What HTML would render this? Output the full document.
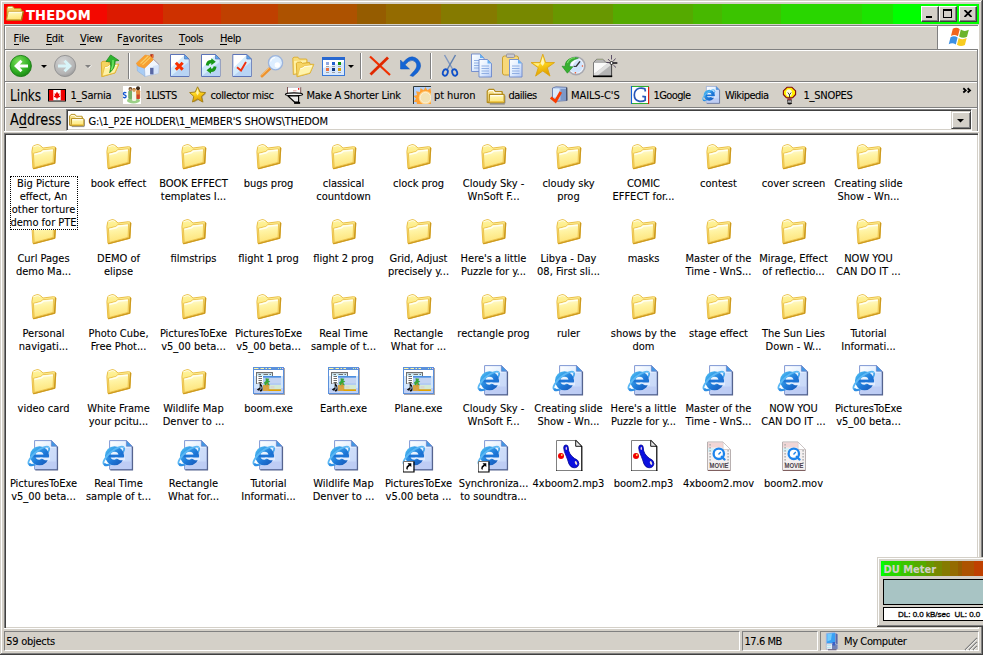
<!DOCTYPE html>
<html><head><meta charset="utf-8"><title>THEDOM</title>
<style>
html,body{margin:0;padding:0}
body{width:983px;height:655px;background:#d4d0c8;position:relative;overflow:hidden;font-family:"DejaVu Sans Condensed","Liberation Sans",sans-serif;font-size:11px;color:#000;line-height:13px;-webkit-text-stroke:0.1px}
.a{position:absolute}
.hl{position:absolute;height:1px;left:4px;width:975px}
.t{position:absolute;white-space:pre}
.lbl{position:absolute;width:75px;text-align:center;white-space:pre;line-height:13px;font-size:11px}
.ic{position:absolute;width:32px;height:32px;overflow:visible}
.lk{position:absolute;top:89px;white-space:pre;font-size:11px;line-height:13px}
u{text-decoration:none;border-bottom:1px solid #000;display:inline-block;line-height:10px;padding-bottom:0}
</style></head>
<body>

<svg width="0" height="0" style="position:absolute">
<defs>
<linearGradient id="fg" x1="0" y1="0" x2="0.15" y2="1"><stop offset="0" stop-color="#fffde0"/><stop offset="0.45" stop-color="#fff3a2"/><stop offset="1" stop-color="#fee47a"/></linearGradient>
<linearGradient id="fb" x1="0" y1="0" x2="0" y2="1"><stop offset="0" stop-color="#fff6a4"/><stop offset="0.35" stop-color="#fdea84"/><stop offset="1" stop-color="#f4d25c"/></linearGradient>
<linearGradient id="pg" x1="0" y1="0" x2="1" y2="1"><stop offset="0" stop-color="#ffffff"/><stop offset="0.45" stop-color="#e4f0ff"/><stop offset="1" stop-color="#b4c8f4"/></linearGradient>
<linearGradient id="eg" x1="0" y1="0" x2="1" y2="1"><stop offset="0" stop-color="#46b4f0"/><stop offset="0.6" stop-color="#1e78d8"/><stop offset="1" stop-color="#1860c0"/></linearGradient>
<radialGradient id="gb" cx="0.4" cy="0.3" r="0.8"><stop offset="0" stop-color="#7ee05a"/><stop offset="0.6" stop-color="#2fae22"/><stop offset="1" stop-color="#157a10"/></radialGradient>
<radialGradient id="gf" cx="0.4" cy="0.3" r="0.8"><stop offset="0" stop-color="#d4d4d4"/><stop offset="0.7" stop-color="#b4b4b4"/><stop offset="1" stop-color="#8c8c8c"/></radialGradient>
<linearGradient id="sg" x1="0" y1="0" x2="0.3" y2="1"><stop offset="0" stop-color="#fff6a0"/><stop offset="0.5" stop-color="#ffd820"/><stop offset="1" stop-color="#e0a000"/></linearGradient>

<!-- large folder -->
<symbol id="fo" viewBox="0 0 32 32">
<path d="M4.9 12.5 L5.700 8.100 Q6 7 7.100 6.600 L10 5.700 Q11 5.500 11.900 5.900 L13.700 6.800 L15.900 9 L26.400 7.700 Q28.800 7.500 28.800 9.500 L27.900 24.300 L6.800 29.700 Q6 29.800 5.900 29 Z" fill="url(#fb)" stroke="#e6b838" stroke-width="0.900" stroke-linejoin="round"/>
<path d="M6.300 7.800 L10 6.700 Q11 6.500 11.800 6.900 L13.200 7.600" fill="none" stroke="#fffce8" stroke-width="1"/>
<path d="M28.500 9.200 L27.600 24 L6.800 29.400" fill="none" stroke="#cc9a20" stroke-width="1.500" stroke-linejoin="round" stroke-linecap="round"/>
<path d="M6.400 14.300 L13.700 12.500 L15.800 10.700 L26.600 9.800 L26.100 23.400 L7.200 28.500 Z" fill="url(#fg)" stroke="#e8ba40" stroke-width="0.800" stroke-linejoin="round"/>
<path d="M7.500 15.400 L14.200 13.800 L16.300 12.100 L25.700 11.200" fill="none" stroke="#fffff4" stroke-width="1.400"/>
</symbol>

<!-- IE html doc -->
<symbol id="ie" viewBox="0 0 32 32">
<path d="M7.6 1.6 L24.4 1.6 L30 7.2 L30 30.3 L7.6 30.3 Z" fill="url(#pg)" stroke="#7f98d4" stroke-width="1"/>
<path d="M22 9 L29.5 9 L29.5 29.8 L8.100 29.8 L8.100 22 L22 22 Z" fill="#c9d9f8" opacity="0.75"/>
<path d="M8.100 22.500 H29.500 V29.800 H8.100 Z" fill="#b9c8f2" opacity="0.7"/>
<path d="M30.500 7.500 L30.500 30.900 L8.300 30.900" fill="none" stroke="#56648f" stroke-width="1.2"/>
<path d="M24.400 1.600 L24.400 7.200 L30 7.200 Z" fill="#3f98e6" stroke="#7088c8" stroke-width="0.8"/>
<path d="M21.760 8.440 A13 4.600 -40 0 1 1.840 25.160" fill="none" stroke="#4aa8ee" stroke-width="1.7"/>
<circle cx="12.500" cy="16.700" r="6.800" fill="none" stroke="url(#eg)" stroke-width="5.500"/>
<rect x="6.500" y="15.600" width="15" height="2.900" fill="#1c74d6"/>
<path d="M12.500 18.500 L23 18.500 L23 21.300 L18 21.300 Z" fill="#e2edff"/>
<path d="M1.840 25.160 A13 4.600 -40 0 1 21.760 8.440" fill="none" stroke="#5cb8f4" stroke-width="1.800"/>
<path d="M1.500 24.500 Q1.500 27.800 5 27.300 Q8 26.800 10.500 25.600 Q5.500 26.300 3.300 24.300 Z" fill="#2e8ee4"/>
</symbol>

<!-- shortcut overlay -->
<symbol id="sc" viewBox="0 0 32 32" overflow="visible">
<rect x="1.5" y="22.5" width="10" height="10" fill="#fff"/>
<path d="M1.5 33 V22.5 H12" fill="none" stroke="#707070" stroke-width="1"/>
<path d="M12 22.500 V33 H1" fill="none" stroke="#000" stroke-width="1.2"/>
<path d="M9.300 24.300 L5.500 24.300 L6.700 25.500 Q3.800 27.300 4.200 29.700 L5.400 30.900 Q5.300 28.300 7.900 26.700 L9.300 28.100 Z" fill="#000"/>
</symbol>

<!-- exe icon -->
<symbol id="ex" viewBox="0 0 32 32" overflow="visible">
<rect x="2" y="4" width="31" height="27" fill="#90888c" opacity="0.75"/>
<rect x="1" y="3" width="31" height="27" fill="#5b90dc"/>
<rect x="2" y="6" width="29" height="6" fill="#fff"/>
<rect x="2" y="12" width="29" height="12" fill="#d2e6fc"/>
<rect x="2" y="24" width="29" height="5" fill="#c0d0f4"/>
<path d="M2 4.500 H6.500 M8.500 4.500 H12 M13.500 4.500 H15 M16.500 4.500 H19" stroke="#fff6a0" stroke-width="1"/>
<rect x="26" y="4" width="1" height="1" fill="#d8f4a0"/><rect x="28" y="4" width="1" height="1" fill="#d8f4a0"/><rect x="30" y="4" width="1" height="1" fill="#fcc8ec"/>
<rect x="4" y="8" width="17" height="12" fill="#707070"/>
<rect x="5" y="9.500" width="15" height="10" fill="#fff"/>
<rect x="5" y="9.500" width="15" height="2.500" fill="#d0f0fc"/>
<path d="M6.500 10.500 H9 M11.500 10.500 H16 M17.500 10.500 H19 M6.500 12.500 H10 M6.500 14.500 H10 M6.500 16.500 H10 M6.500 18.500 H10" stroke="#707070" stroke-width="1"/>
<rect x="11" y="12" width="18" height="15" fill="#b4ccf2"/>
<rect x="11" y="12" width="18" height="1.600" fill="#4c8ee0"/>
<rect x="17.500" y="14" width="11.500" height="5" fill="#c4d4f2"/>
<rect x="11" y="21" width="6.500" height="6" fill="#d8a444"/>
<rect x="17.500" y="21" width="11.500" height="4.300" fill="#d4ead4"/><rect x="18.500" y="22" width="4" height="2.500" fill="#d8d8d0"/>
<rect x="16.500" y="25.300" width="12.500" height="1.700" fill="#e2a200"/>
<path d="M13.500 14.300 L17.300 14.800 L16.300 16.500 L18.300 17.500 L16.200 18.800 L18 21.300 L14.500 20.600 L13 21.500 L12 18.500 L13.800 17 Z" fill="#36a63a"/>
<path d="M14.800 19 L15.600 19 L15.400 22.500 L14.500 22.500 Z" fill="#c88820"/>
<path d="M7.700 18.500 L8.500 18.500 L8.500 19.500 Q10.800 21 10.500 24 L10.500 26.500 L8.800 27.800 L7.300 26.500 L9.500 25 L9.500 23 Q8.800 22 8.500 21.800 L8.500 25 L6.500 26.800 L4.800 25.500 L7.700 23.500 Z" fill="#101010"/>
</symbol>

<!-- mp3 icon -->
<symbol id="mp" viewBox="0 0 32 32">
<path d="M4.5 1.5 L23.5 1.5 L29.5 7.5 L29.5 32.5 L4.5 32.5 Z" fill="#fff"/>
<path d="M4.5 32.5 L4.5 1.5 L23.5 1.5" fill="none" stroke="#808080" stroke-width="1"/>
<path d="M23.5 1.2 L29.800 7.500 L29.800 32.500" fill="none" stroke="#000" stroke-width="1.2"/><path d="M30.400 32.400 L4 32.400" fill="none" stroke="#000" stroke-width="1.800"/>
<path d="M23.7 1.8 L23.7 7.3 L29.2 7.3" fill="#e8e8e8" stroke="#000" stroke-width="0.9"/>
<circle cx="9" cy="17" r="3" fill="#f00000"/><circle cx="9.8" cy="16" r="0.9" fill="#ffe060"/>
<path d="M11.700 8.800 Q11.700 5.900 14 5.900 Q16.300 6 16.300 9 Q16.300 12 17.800 14.500 Q19.500 17.300 22.300 19.300 Q26.900 21 26.900 24.600 Q26.500 28.800 22 28.800 Q18.500 28.500 17 25 Q15.600 20.500 14.300 17.300 Q11.700 12 11.700 8.800 Z" fill="#0a10e0" stroke="#000090" stroke-width="0.800"/>
<ellipse cx="14.3" cy="9.4" rx="0.7" ry="1.6" fill="#f0d0e0"/><ellipse cx="24" cy="24" rx="1" ry="2" transform="rotate(-25 24 24)" fill="#f0e0d0"/>
</symbol>

<!-- mov icon -->
<symbol id="mv" viewBox="0 0 32 32">
<path d="M5.5 3 L21 3 L28.5 10.5 L28.5 31.3 L5.5 31.3 Z" fill="#f4f0f0" stroke="#b8b0b0" stroke-width="1"/>
<path d="M6 31.6 H28.3" stroke="#806060" stroke-width="1.2"/>
<path d="M21 3 L28.5 10.5 L21 10.5 Z" fill="#fff" stroke="#c8c0c0" stroke-width="0.8"/>
<rect x="6" y="3.5" width="15" height="5" fill="#f0d0d0" opacity="0.8"/>
<rect x="6" y="9" width="6" height="4" fill="#d0f0f8" opacity="0.8"/>
<g fill="#b4b4b4"><rect x="7.3" y="5" width="1.6" height="1.6"/><rect x="7.3" y="8" width="1.6" height="1.6"/><rect x="7.3" y="11" width="1.6" height="1.6"/><rect x="7.3" y="14" width="1.6" height="1.6"/><rect x="7.3" y="17" width="1.6" height="1.6"/><rect x="7.3" y="20" width="1.6" height="1.6"/><rect x="7.3" y="23" width="1.6" height="1.6"/>
<rect x="25.3" y="11" width="1.6" height="1.6"/><rect x="25.3" y="14" width="1.6" height="1.6"/><rect x="25.3" y="17" width="1.6" height="1.6"/><rect x="25.3" y="20" width="1.6" height="1.6"/><rect x="25.3" y="23" width="1.6" height="1.6"/></g>
<circle cx="16.8" cy="14.8" r="5.2" fill="#fff" stroke="#1c84ec" stroke-width="2.300"/>
<path d="M19.800 17.800 L22.500 20.500" stroke="#1c84ec" stroke-width="2.400" stroke-linecap="round"/>
<path d="M16.5 15.5 L18.8 13" stroke="#1c84ec" stroke-width="1.3"/>
<text x="17" y="29.3" font-family="'Liberation Sans',sans-serif" font-size="6.6" font-weight="700" fill="#484048" text-anchor="middle" textLength="19" lengthAdjust="spacingAndGlyphs">MOVIE</text>
</symbol>

<!-- small folder 16 -->
<symbol id="sf" viewBox="0 0 16 16" overflow="visible">
<path d="M2.800 14.600 H15.300 M15.400 7.500 V14.200" stroke="#606068" stroke-width="1" opacity="0.7"/>
<path d="M0.600 13.300 L0.600 4 L2.100 2.400 L6 2.400 L7.400 4.300 L12.800 4.300 Q13.300 4.300 13.300 5 L13.300 13.300 Z" fill="#f8e288" stroke="#b48c1c" stroke-width="1" stroke-linejoin="round"/>
<path d="M1.600 4.300 L2.500 3.400 L5.600 3.400 L6.800 5.300 L12.300 5.300" fill="none" stroke="#fffdf0" stroke-width="1"/>
<path d="M2.500 6.600 L14.300 6.600 Q14.900 6.600 14.900 7.200 L14.900 13.100 Q14.900 13.700 14.300 13.700 L1.500 13.700 Q2.300 13 2.300 12 Z" fill="url(#fg)" stroke="#b48c1c" stroke-width="1" stroke-linejoin="round"/>
<path d="M3.300 7.700 H13.800" stroke="#fffef4" stroke-width="1"/>
<path d="M3 12.700 H14.300" stroke="#f0c848" stroke-width="1"/>
</symbol>
</defs>
</svg>


<div class="a" style="left:0;top:0;width:983px;height:655px;background:#d4d0c8"></div>
<div class="a" style="left:1px;top:1px;width:980px;height:1px;background:#fff"></div>
<div class="a" style="left:1px;top:1px;width:1px;height:652px;background:#fff"></div>
<div class="a" style="left:982px;top:0;width:1px;height:655px;background:#404040"></div>
<div class="a" style="left:0;top:654px;width:983px;height:1px;background:#404040"></div>
<div class="a" style="left:981px;top:1px;width:1px;height:653px;background:#808080"></div>
<div class="a" style="left:1px;top:653px;width:981px;height:1px;background:#808080"></div>

<div class="a" style="left:4px;top:4px;width:975px;height:20px;background:#f00"><div class="a" style="left:0px;top:0;width:46px;height:20px;background:rgb(255,0,0)"></div><div class="a" style="left:46px;top:0;width:57px;height:20px;background:rgb(244,8,0)"></div><div class="a" style="left:103px;top:0;width:56px;height:20px;background:rgb(220,26,0)"></div><div class="a" style="left:159px;top:0;width:58px;height:20px;background:rgb(206,49,0)"></div><div class="a" style="left:217px;top:0;width:57px;height:20px;background:rgb(191,64,0)"></div><div class="a" style="left:274px;top:0;width:79px;height:20px;background:rgb(173,82,0)"></div><div class="a" style="left:353px;top:0;width:29px;height:20px;background:rgb(149,92,0)"></div><div class="a" style="left:382px;top:0;width:55px;height:20px;background:rgb(148,107,0)"></div><div class="a" style="left:437px;top:0;width:56px;height:20px;background:rgb(133,122,0)"></div><div class="a" style="left:493px;top:0;width:56px;height:20px;background:rgb(119,136,0)"></div><div class="a" style="left:549px;top:0;width:60px;height:20px;background:rgb(104,151,0)"></div><div class="a" style="left:609px;top:0;width:80px;height:20px;background:rgb(85,170,0)"></div><div class="a" style="left:689px;top:0;width:29px;height:20px;background:rgb(71,184,0)"></div><div class="a" style="left:718px;top:0;width:59px;height:20px;background:rgb(59,196,0)"></div><div class="a" style="left:777px;top:0;width:81px;height:20px;background:rgb(41,214,0)"></div><div class="a" style="left:858px;top:0;width:31px;height:20px;background:rgb(27,228,0)"></div><div class="a" style="left:889px;top:0;width:86px;height:20px;background:rgb(0,255,0)"></div></div>
<!-- title -->
<svg class="a" style="left:5px;top:4px;width:20px;height:20px" viewBox="0 0 20 20">
<path d="M2 4.300 Q2 2.800 3.500 2.600 L7 2.400 Q8 2.400 8.600 3.200 L9.500 4.500 L15 4.500 Q16.300 4.500 16.300 5.800 L16.300 8 L2 15 Z" fill="#f4d468" stroke="#c49a20" stroke-width="0.900"/>
<path d="M3 3.600 L7.300 3.400" stroke="#fffbe0" stroke-width="1.100"/>
<path d="M3.300 7.300 L18.300 7.300 L16.300 16 L1.600 16 Z" fill="url(#fg)" stroke="#c89c20" stroke-width="0.900" stroke-linejoin="round"/>
<path d="M4 8.400 H17" stroke="#fffce8" stroke-width="1"/>
<path d="M18.300 7.600 L16.500 16.200 L2 16.300" fill="none" stroke="#a47c14" stroke-width="1.100"/>
</svg>
<div class="t" style="left:26px;top:5px;font-size:14.5px;font-weight:700;color:#fff;line-height:20px;letter-spacing:0.2px">THEDOM</div>
<!-- caption buttons -->
<div class="a cb" style="left:921px"><div class="a" style="left:4px;top:9px;width:6px;height:2px;background:#000"></div></div>
<div class="a cb" style="left:939px"><div class="a" style="left:3px;top:2px;width:9px;height:9px;box-sizing:border-box;border:1px solid #000;border-top-width:2px"></div></div>
<div class="a cb" style="left:959px"><svg class="a" style="left:4px;top:3px" width="8" height="7" viewBox="0 0 8 7"><path d="M0.500 0 L7.500 7 M7.500 0 L0.500 7" stroke="#000" stroke-width="1.900"/></svg></div>
<style>
.cb{top:6px;width:18px;height:16px;box-sizing:border-box;background:#d4d0c8;border:1px solid;border-color:#fff #404040 #404040 #fff;box-shadow:inset -1px -1px 0 #808080}
.sep{position:absolute;top:53px;width:1px;height:26px;background:#808080;box-shadow:1px 0 0 #fff}
.mi{position:absolute;top:32px;font-size:11px;line-height:13px;white-space:pre}
</style>
<!-- rebar border -->
<div class="hl" style="top:25px;background:#808080"></div>
<div class="hl" style="top:26px;left:5px;width:972px;background:#fff"></div>
<div class="a" style="left:4px;top:25px;width:1px;height:107px;background:#808080"></div>
<div class="a" style="left:5px;top:26px;width:1px;height:105px;background:#fff"></div>
<div class="a" style="left:977px;top:26px;width:1px;height:105px;background:#808080"></div><div class="a" style="left:978px;top:25px;width:1px;height:107px;background:#fff"></div>
<div class="hl" style="top:49px;background:#808080;left:5px;width:972px"></div><div class="hl" style="top:50px;background:#fff;left:5px;width:972px"></div>
<div class="hl" style="top:81px;background:#808080;left:5px;width:972px"></div><div class="hl" style="top:82px;background:#fff;left:5px;width:972px"></div>
<div class="hl" style="top:107px;background:#808080;left:5px;width:972px"></div><div class="hl" style="top:108px;background:#fff;left:5px;width:972px"></div>
<div class="hl" style="top:131px;background:#fff"></div>
<!-- menu -->
<div class="mi" style="letter-spacing:-0.4px;left:13.5px"><u>F</u>ile</div>
<div class="mi" style="letter-spacing:-0.4px;left:46px"><u>E</u>dit</div>
<div class="mi" style="letter-spacing:-0.4px;left:80px"><u>V</u>iew</div>
<div class="mi" style="left:117px">F<u>a</u>vorites</div>
<div class="mi" style="letter-spacing:-0.4px;left:179px"><u>T</u>ools</div>
<div class="mi" style="letter-spacing:-0.4px;left:220px"><u>H</u>elp</div>
<!-- throbber -->
<div class="a" style="left:937px;top:26px;width:1px;height:23px;background:#808080"></div>
<div class="a" style="left:938px;top:26px;width:40px;height:23px;background:#fff"></div>
<svg class="a" style="left:947.5px;top:26.3px" width="23.500" height="22.600" viewBox="0 0 22 20" preserveAspectRatio="none">
<path d="M4.5 2.5 Q8 0.5 11 2.8 L9.3 9 Q6 7 2.8 8.8 Z" fill="#f0641c"/>
<path d="M12 3.2 Q15.5 5.5 19.5 3.4 L17.8 9.6 Q14 11.5 10.4 9.4 Z" fill="#6cb42c"/>
<path d="M2.4 9.9 Q5.8 8 9 10.1 L7.3 16.3 Q4 14.3 0.7 16.2 Z" fill="#3c90e4"/>
<path d="M10 10.6 Q13.6 12.7 17.5 10.7 L15.8 16.9 Q12 18.8 8.4 16.7 Z" fill="#f8cc20"/>
</svg>
<!-- toolbar -->
<svg class="a" style="left:0;top:50px" width="640" height="32" viewBox="0 50 640 32">
<!-- back -->
<circle cx="20.8" cy="66" r="10.6" fill="url(#gb)" stroke="#1a7a14" stroke-width="0.9"/>
<path d="M14 66 L20.5 59.8 L22.5 61.8 L19.8 64.5 L28 64.5 L28 67.5 L19.8 67.5 L22.5 70.2 L20.5 72.2 Z" fill="#fff"/>
<path d="M41 65 h6 l-3 3 Z" fill="#000"/>
<!-- forward -->
<circle cx="65.1" cy="66" r="10.6" fill="url(#gf)" stroke="#909090" stroke-width="0.9"/>
<path d="M72 66 L65.5 59.8 L63.5 61.8 L66.2 64.5 L58 64.5 L58 67.5 L66.2 67.5 L63.5 70.2 L65.5 72.2 Z" fill="#d8f4f8"/>
<path d="M85 65 h6 l-3 3 Z" fill="#808080"/><path d="M88.5 68.3 l3 -3" stroke="#fff" stroke-width="0.8"/>
<!-- up folder -->
<path d="M101.300 62.300 L103 61.300 L107.500 61.200 L108.800 62.800 L114.500 62.500 L115 64.500 L118.800 64.200 L115 73 L101.800 76.700 Z" fill="#f6d460" stroke="#d8a828" stroke-width="0.900" stroke-linejoin="round"/>
<path d="M104.600 67 L108 66.200 L109 64.800 L118.600 64.300 L114.800 72.800 L102.200 76.300 Z" fill="#fff2a4" stroke="#e4b838" stroke-width="0.700" stroke-linejoin="round"/>
<path d="M105 67.800 L108.300 67 L109.500 65.600 L117 65.200" fill="none" stroke="#fffdf0" stroke-width="1"/>
<path d="M110.600 54.900 L118.900 60.500 L115.200 60.900 Q115.300 68 109.700 72.700 Q111.500 67 110.300 61.600 L106 61.500 Z" fill="#2fb42f" stroke="#148414" stroke-width="0.700" stroke-linejoin="round"/>
<path d="M113 60 Q113.500 66 111.300 70" fill="none" stroke="#78e868" stroke-width="1.300"/>
<!-- home -->
<path d="M137 64.400 L144.400 68 L145.100 76.500 L137.400 71 Z" fill="#a8ccf4" stroke="#88acd8" stroke-width="0.500"/>
<path d="M153.500 59.400 L158.900 64.500 L158.500 73.200 L145.100 76.500 L144.400 67.800 Z" fill="#f0f6fe" stroke="#9cb8e0" stroke-width="0.600" stroke-linejoin="round"/>
<path d="M153 66 L158.700 64.800 L158.500 73.200 L151 75 Z" fill="#cfe0f8" opacity="0.8"/>
<rect x="150.100" y="67.800" width="3.400" height="6.600" fill="#5868a4"/>
<rect x="150.300" y="54.200" width="3" height="3.500" fill="#a82814"/><rect x="151.800" y="54.600" width="1.600" height="3" fill="#e86830"/>
<path d="M136.300 63.200 L145.100 55 L150.500 56 L153.600 59.500 L144.500 68.200 L138 66 Z" fill="#f8a030" stroke="#f09028" stroke-width="0.500" stroke-linejoin="round"/>
<path d="M140.500 63.500 L148.300 56 M142.500 64.800 L150.300 57.300" stroke="#f8d068" stroke-width="1.100"/>
<path d="M153.600 59.500 L159.200 64.700" stroke="#b8a0a8" stroke-width="0.900"/>
<!-- stop doc -->
<g id="tdoc"><path d="M170.5 54.5 L184.5 54.5 L189 59 L189 76.5 L170.5 76.5 Z" fill="#fff" stroke="#5c74b8" stroke-width="1"/><path d="M171 68 L184 55.500 L188.500 59.500 L188.500 76 L171 76 Z" fill="#d4ecfc"/><path d="M171 76 L188.500 62 L188.500 76 Z" fill="#b8d4f4"/><path d="M184.5 54.5 L184.5 59 L189 59 Z" fill="#58a8ec" stroke="#5c74b8" stroke-width="0.7"/></g>
<path d="M175.800 62.700 L182.700 69.600 M182.700 62.700 L175.800 69.600" stroke="#f83000" stroke-width="3"/>
<!-- refresh doc -->
<use href="#tdoc" x="31"/>
<path d="M205.800 65.300 Q206.300 60 211.300 60 L211.300 58.300 L215.800 61.800 L211.300 65.300 L211.300 63.200 Q208.800 63.200 208.600 65.800 Z" fill="#189818"/>
<path d="M216.500 66.700 Q216 72 211 72 L211 73.700 L206.500 70.200 L211 66.700 L211 68.800 Q213.500 68.800 213.700 66.200 Z" fill="#189818"/>
<!-- check doc -->
<use href="#tdoc" x="62.3"/>
<path d="M237 67.300 L241 70.600 L246 62" fill="none" stroke="#f03010" stroke-width="1.900"/>
<!-- search -->
<path d="M270 68.300 L262 76" stroke="#ee922c" stroke-width="3" stroke-linecap="round"/><path d="M269.300 67.800 L261.500 75.300" stroke="#f8c070" stroke-width="0.900"/>

<circle cx="275.500" cy="62.800" r="7.100" fill="#ddeeff" stroke="#9cb4dc" stroke-width="1.300"/>
<circle cx="277.300" cy="65" r="2.700" fill="#fff"/>
<path d="M270.500 61.500 Q271.500 58 275 57.500" fill="none" stroke="#fff" stroke-width="1.200"/>
<!-- folders -->
<path d="M292.800 58 L294 57.200 L298 57.200 L299.300 59 L306.500 59 L307 60 L307 72 L293.300 74.500 Z" fill="#f8dc78" stroke="#dcac2c" stroke-width="0.900" stroke-linejoin="round"/>
<path d="M294 61 L306 60.300 L306 71.500 L294.300 73.500 Z" fill="#fff2a8"/>
<path d="M296.300 63.300 L297.500 62.300 L301 62 L302.300 63.300 L309.500 62.500 L310 64.300 L313.800 64.300 L310 73.300 L297 76.800 Z" fill="#f6d464" stroke="#d8a828" stroke-width="0.900" stroke-linejoin="round"/>
<path d="M299.800 68 L303 67 L304 65.800 L313.500 64.800 L309.800 73 L297.500 76.300 Z" fill="#fff4ac" stroke="#e4b838" stroke-width="0.600" stroke-linejoin="round"/>
<path d="M300.300 68.800 L303.300 67.900 L304.300 66.700 L312 65.800" fill="none" stroke="#fffdf0" stroke-width="0.900"/>
<!-- views -->
<rect x="322.5" y="57.5" width="22" height="18" fill="#fff" stroke="#3878d8" stroke-width="1"/>
<rect x="322" y="57" width="23" height="3" fill="#2868d0"/>
<path d="M323 68 L344 62 L344 75 L323 75 Z" fill="#d8e8fc"/>
<rect x="326" y="62" width="3" height="3" fill="#90a8e0"/><rect x="332" y="62" width="3" height="3" fill="#2060d0"/><rect x="338" y="62" width="3" height="3" fill="#109010"/>
<rect x="326" y="68" width="3" height="3" fill="#f07040"/><rect x="332" y="68" width="3" height="3" fill="#103880"/><rect x="338" y="68" width="3" height="3" fill="#d8a010"/>
<path d="M326 66.5 h3 M332 66.5 h3 M338 66.5 h3 M326 72.5 h3 M332 72.5 h3 M338 72.5 h3" stroke="#909090" stroke-width="0.8"/>
<path d="M348 65 h6 l-3 3 Z" fill="#000"/>
<!-- delete -->
<path d="M370 56.5 L390 75" stroke="#f03000" stroke-width="2.2"/><path d="M388 57.5 L370.5 74.5" stroke="#e02800" stroke-width="2.8"/>
<!-- undo -->
<path d="M410 75.5 L414.5 70.5 Q418.5 66 415.5 62 Q412.5 59 408.5 61.5 L405 64.8 L409.5 69 L400.5 69 L400.5 60 L403 62.5 L406.5 59 Q412.5 54.5 418 59.5 Q423.5 66 417.5 72.5 L413 76.5 Z" fill="#1464d4" stroke="#0c50b8" stroke-width="0.5"/>
<!-- cut -->
<path d="M444.5 55 L452.5 69" stroke="#8098c0" stroke-width="1.5"/><path d="M455.5 55 L447.5 69" stroke="#6080b0" stroke-width="1.5"/>
<ellipse cx="445.3" cy="72.5" rx="2.4" ry="3.3" transform="rotate(20 445.3 72.5)" fill="none" stroke="#1050c8" stroke-width="1.8"/>
<ellipse cx="454.7" cy="72.5" rx="2.4" ry="3.3" transform="rotate(-20 454.7 72.5)" fill="none" stroke="#1050c8" stroke-width="1.8"/>
<!-- copy -->
<g id="cdoc"><path d="M471.5 54 L480 54 L484 58 L484 71.5 L471.5 71.5 Z" fill="url(#pg)" stroke="#6c88cc" stroke-width="0.9"/><path d="M480 54 L480 58 L484 58 Z" fill="#68b0f0"/><path d="M474 60.5 h7.5 M474 63 h7.5 M474 65.500 h7.5 M474 68 h7.500" stroke="#88a8e0" stroke-width="0.9"/></g>
<use href="#cdoc" x="7.5" y="5.5"/>
<!-- paste -->
<rect x="502.500" y="56" width="16" height="19" rx="2" fill="#f8d878" stroke="#c8a030" stroke-width="1"/>
<rect x="506.500" y="54" width="8" height="3.500" rx="1" fill="#c8c8d0" stroke="#888898" stroke-width="0.8"/>
<use href="#cdoc" x="38" y="5.500"/>
<!-- star -->
<path d="M542.8 54.2 L545.6 62.6 L554.5 62.6 L547.3 67.7 L550.0 76.1 L542.8 70.9 L535.6 76.1 L538.3 67.7 L531.1 62.6 L540.0 62.6 Z" fill="url(#sg)" stroke="#dca410" stroke-width="0.900" stroke-linejoin="round"/>
<path d="M542.800 57 L544.500 62.800 L542.800 66 L540.500 63.500 Z" fill="#fffad0" opacity="0.85"/>
<path d="M533.500 63.300 L540 63.300 L538 66.500 Z" fill="#fff6b0" opacity="0.7"/>
<!-- history -->
<circle cx="576.100" cy="65.800" r="8.800" fill="#eef4fc" stroke="#a8a8b0" stroke-width="1.700"/>
<circle cx="576.100" cy="65.800" r="6.900" fill="#cfe3fc"/>
<path d="M571 61.500 Q574 59.500 577.500 60 Q573 62.500 571.500 68.500 Z" fill="#fff" opacity="0.9"/>
<path d="M576 66.600 L580 61.300" stroke="#303030" stroke-width="1.400"/><path d="M576.200 66.500 L573.600 66.300" stroke="#404040" stroke-width="1.200"/>
<circle cx="582.500" cy="66" r="0.800" fill="#f05020"/><circle cx="575.400" cy="72.800" r="0.800" fill="#f05020"/>
<path d="M578.500 58 Q571 56.300 566.500 61.300 Q565 63.500 565.200 66.400 L562 66.200 L567.400 73.200 L572.900 66.800 L569.300 66.600 Q569.300 63.800 571 62 Q573.500 59.500 578.500 58 Z" fill="#38b030" stroke="#1c8c1c" stroke-width="0.600" stroke-linejoin="round"/>
<path d="M575 57.800 Q569.500 58 567.300 63" fill="none" stroke="#80e070" stroke-width="1.100"/>
<!-- new folder -->
<path d="M593.500 62.500 L596.600 59.300 L603 59.300 L606 62.500 L611.500 62.500 L611.500 76 L593.500 76 Z" fill="#b4b4b4"/>
<path d="M594 74 L594 63 L608 63 Z" fill="#fafafa"/>
<path d="M594 76 L594 74 L608 63 L611 63 L611 65 L597 76 Z" fill="#e0e0e0"/>
<path d="M593.500 76 L593.500 62.500 L596.600 59.300 L603 59.300 L606 62.500 L611.500 62.500" fill="none" stroke="#707070" stroke-width="0.900"/>
<path d="M597 59.400 H603" stroke="#a0a888" stroke-width="1"/>
<path d="M611.600 63 V76.500" stroke="#404040" stroke-width="1"/>
<path d="M593 76.300 H612.200" stroke="#000" stroke-width="1.700"/>
<path d="M611.500 55 V59.500 M608 59 L610 61.300 M615.500 58.500 L613 61.500 M613.500 63 L617.300 63 M613.300 65 L616 67.500 M606.500 62.300 L609.500 62.800" stroke="#403050" stroke-width="0.800"/>
<path d="M612.800 63 H617.300" stroke="#101010" stroke-width="1.300"/>
<circle cx="611.500" cy="63" r="1.500" fill="#fff" stroke="#101010" stroke-width="0.900"/>
</svg>
<div class="sep" style="left:128px"></div><div class="sep" style="left:360px"></div><div class="sep" style="left:430px"></div>
<!-- links bar -->
<div class="t" style="left:10px;top:87.5px;font-size:15.5px;line-height:17px;transform:scaleX(0.87);transform-origin:0 0">Links</div>
<svg class="a" style="left:0;top:83px" width="983" height="24" viewBox="0 83 983 24">
<!-- flag -->
<rect x="48.5" y="89.500" width="17" height="11.500" fill="#fff" stroke="#000" stroke-width="1"/>
<rect x="49" y="90" width="4.300" height="10.500" fill="#f00000"/><rect x="60.700" y="90" width="4.300" height="10.500" fill="#f00000"/>
<path d="M57 91.500 L58.200 93.800 L59.500 93.300 L59 96 L60.300 95.500 L59.800 97 L57.400 98 L57.400 99.500 L56.600 99.500 L56.600 98 L54.200 97 L53.700 95.500 L55 96 L54.500 93.300 L55.800 93.800 Z" fill="#f00000"/>
<!-- 1lists people -->
<rect x="123" y="86" width="18" height="18" fill="#fff"/>
<path d="M126.300 92.800 Q124.300 91.800 123.500 93.300 Q123.300 94.700 125 95.200 Q126.600 95.900 125.800 97.200 Q124.800 98.200 123.200 97.200" fill="none" stroke="#1458d0" stroke-width="1.400"/>
<ellipse cx="133.500" cy="100.500" rx="6.500" ry="3" fill="#9cd088"/>
<rect x="128.200" y="90.500" width="4" height="8.500" rx="1.500" fill="#78b068"/><circle cx="130.400" cy="89" r="1.900" fill="#6c4828"/><circle cx="130.500" cy="89.600" r="1.100" fill="#d8a878"/>
<rect x="136" y="89.800" width="4.200" height="9" rx="1.500" fill="#e08838"/><circle cx="138" cy="88.200" r="2" fill="#3c2818"/><rect x="136.500" y="94.500" width="3.200" height="4.500" fill="#d04028"/>
<rect x="132" y="91.500" width="4.200" height="9.500" rx="1.500" fill="#f4f4e8"/><circle cx="134" cy="90" r="1.900" fill="#d8a060"/><path d="M132.500 89.300 Q134 87.500 135.600 89.300" fill="none" stroke="#a87030" stroke-width="1"/>
<!-- star -->
<path d="M198.700 88 L201 93 L206.300 93.500 L202.400 97.100 L203.600 102.500 L198.700 99.700 L193.800 102.500 L195 97.100 L191.100 93.500 L196.400 93 Z" fill="#887040" opacity="0.6"/>
<path d="M197.600 86.800 L200 92 L205.600 92.600 L201.400 96.400 L202.700 102 L197.600 99.100 L192.500 102 L193.800 96.400 L189.600 92.600 L195.200 92 Z" fill="url(#sg)" stroke="#a88418" stroke-width="1" stroke-linejoin="round"/>
<path d="M197.600 89 L198.900 92.900 L197.600 95.500 L196 93 Z" fill="#fffbd0" opacity="0.8"/>
<!-- funnel/mailbox -->
<rect x="287.500" y="87.300" width="13.200" height="6.500" fill="#fff"/><path d="M287.500 87 V93.500 M300.700 87 V93.500" stroke="#805858" stroke-width="1"/><path d="M288 87.400 H300.500" stroke="#c0c0c8" stroke-width="0.800"/>
<rect x="298" y="88" width="1.300" height="1.800" fill="#f02020"/><path d="M293 90.800 h3.500" stroke="#e0a0a0" stroke-width="1"/>
<ellipse cx="294" cy="94.300" rx="8.600" ry="1.500" fill="#f4f4f4" stroke="#000" stroke-width="1.200"/>
<path d="M288 96 L294.500 102 L298.600 102 L298.600 96 Z" fill="#ececec" stroke="#000" stroke-width="1.100" stroke-linejoin="round"/>
<rect x="294.100" y="101.900" width="6" height="2" fill="#000"/>
<!-- sun -->
<clipPath id="sunc"><rect x="413" y="86" width="18" height="18"/></clipPath>
<rect x="413" y="86" width="18" height="18" fill="#b4d2fc"/>
<g clip-path="url(#sunc)">
<path d="M425.500 87 l1.900 3.300 l3.100 -2.200 l0.600 3.800 l3.800 -0.600 l-1 3.700 l3.600 1 l-2.700 2.700 l2.700 2.700 l-3.600 1 l1 3.700 l-3.800 -0.600 l-0.600 3.800 l-3.100 -2.200 l-1.900 3.300 l-1.900 -3.300 l-3.100 2.200 l-0.600 -3.800 l-3.800 0.600 l1 -3.700 l-3.600 -1 l2.700 -2.700 l-2.700 -2.700 l3.600 -1 l-1 -3.700 l3.800 0.600 l0.600 -3.800 l3.100 2.200 Z" fill="#ffa234"/>
<circle cx="425.500" cy="97.700" r="6.800" fill="#ffd488"/>
<circle cx="425.500" cy="97.700" r="5.300" fill="#f2e2b4" stroke="#fff8e8" stroke-width="0.700"/>
</g>
<path d="M413.500 104 V86.500 H431" fill="none" stroke="#303838" stroke-width="1"/>
<!-- folder -->
<use href="#sf" x="486.500" y="86.500" width="19" height="19"/>
<!-- mails -->
<path d="M552.500 88 L556 86.800 L566.500 87.300 L567 100.500 L556.500 101.300 L552.500 99.500 Z" fill="#a8c0e8" stroke="#6070a0" stroke-width="0.800"/>
<path d="M553 88.500 L559.500 88.500 L559.500 97.500 L553 97.500 Z" fill="#dcecfc"/>
<path d="M560.500 89 L566.300 89 L566.300 100 L560.500 100.500 Z" fill="#7c98c8"/>
<path d="M566.800 87.500 V100.500" stroke="#303848" stroke-width="1"/>
<path d="M550.800 97.500 L555.500 101.300 L560.800 92" fill="none" stroke="#f83c00" stroke-width="2.800" stroke-linejoin="miter"/>
<!-- google -->
<rect x="631" y="86" width="18" height="18" fill="#fff"/>
<path d="M631 86.500 H649 M631 103.500 H649" stroke="#30b030" stroke-width="1.100"/>
<path d="M631.500 86 V104" stroke="#1060d8" stroke-width="1.100"/><path d="M648.600 87 V104" stroke="#e01000" stroke-width="1.100"/>
<path d="M645.400 91.500 Q645 89.500 644.800 88.700 Q642 87.600 639.300 88.300 Q634.300 89.800 634.300 95 Q634.300 100.300 639.500 101.300 Q643 101.700 645.200 100.200 L645.200 96.800 L642.300 96.300" fill="none" stroke="#2858b8" stroke-width="1.700"/>
<!-- ie doc small -->
<use href="#ie" x="702" y="85.500" width="18.500" height="18.500"/>
<!-- bulb -->
<path d="M787 87.300 L792 87.300 L795.600 90.800 L795.600 94.500 L792.500 97.800 L786.500 97.800 L783.400 94.500 L783.400 90.800 Z" fill="#ffee00" stroke="#800808" stroke-width="1.100" stroke-linejoin="round"/>
<ellipse cx="789" cy="92.800" rx="3" ry="3.600" fill="#fffce0"/>
<path d="M787.800 92.500 L789.500 94.800 L791.200 92.500 M789.500 94.800 V97.500" fill="none" stroke="#282828" stroke-width="0.900"/>
<rect x="787.300" y="98.200" width="4.400" height="2.200" fill="#a03030"/>
<rect x="787.600" y="100.200" width="3.800" height="2" fill="#b8b8c0" stroke="#303030" stroke-width="0.600"/>
<path d="M787.500 103 Q789.500 104.500 791.800 103" fill="none" stroke="#101010" stroke-width="1.300"/>
<!-- chevron -->
<path d="M963.300 88.300 L965.700 90.400 L963.300 92.500 M967.600 88.300 L970 90.400 L967.600 92.500" fill="none" stroke="#000" stroke-width="1.800"/>
</svg>
<div class="lk" style="letter-spacing:-0.2px;left:70.500px">1_Sarnia</div>
<div class="lk" style="letter-spacing:-0.3px;left:145.5px">1LISTS</div>
<div class="lk" style="letter-spacing:-0.4px;left:210.500px">collector misc</div>
<div class="lk" style="letter-spacing:-0.26px;left:306.500px">Make A Shorter Link</div>
<div class="lk" style="letter-spacing:-0.07px;left:434px">pt huron</div>
<div class="lk" style="letter-spacing:-0.54px;left:508.500px">dailies</div>
<div class="lk" style="letter-spacing:-0.09px;left:571px">MAILS-C'S</div>
<div class="lk" style="letter-spacing:-0.6px;left:653.500px">1Google</div>
<div class="lk" style="letter-spacing:-0.53px;left:725px">Wikipedia</div>
<div class="lk" style="letter-spacing:-0.26px;left:803.500px">1_SNOPES</div>
<!-- address bar -->
<div class="t" style="left:10px;top:112.4px;font-size:15.5px;line-height:17px;transform:scaleX(0.925);transform-origin:0 0">A<u style="line-height:13px;padding-bottom:0">d</u>dress</div>
<div class="a" style="left:66px;top:109px;width:906px;height:22px;box-sizing:border-box;background:#fff;border:1px solid;border-color:#808080 #fff #fff #808080;box-shadow:inset 1px 1px 0 #404040,inset -1px -1px 0 #d4d0c8"></div>
<svg class="a" style="left:69px;top:112px" width="16" height="16"><use href="#sf"/></svg>
<div class="t" style="left:88.500px;top:115px;font-size:11px;line-height:13px;letter-spacing:-0.100px">G:\1_P2E HOLDER\1_MEMBER'S SHOWS\THEDOM</div>
<div class="a" style="left:951px;top:111px;width:20px;height:18px;box-sizing:border-box;background:#d4d0c8;border:1px solid;border-color:#d4d0c8 #404040 #404040 #d4d0c8;box-shadow:inset 1px 1px 0 #fff,inset -1px -1px 0 #808080"></div>
<svg class="a" style="left:957px;top:119px" width="7" height="4"><path d="M0 0 h7 l-3.500 3.500 Z" fill="#000"/></svg>
<!-- content area -->
<div class="a" style="left:4px;top:133px;width:974px;height:495px;background:#808080"></div>
<div class="a" style="left:5px;top:134px;width:973px;height:494px;background:#404040"></div>
<div class="a" style="left:6px;top:135px;width:972px;height:493px;background:#d4d0c8"></div>
<div class="a" style="left:6px;top:135px;width:971px;height:492px;background:#fff"></div>
<div class="a" style="left:4px;top:628px;width:975px;height:1px;background:#fff"></div>
<div class="a" style="left:978px;top:133px;width:1px;height:496px;background:#fff"></div>

<svg class="ic" style="left:27px;top:139px"><use href="#fo"/></svg>
<svg class="ic" style="left:102px;top:139px"><use href="#fo"/></svg>
<div class="lbl" style="left:81px;top:177px">book effect</div>
<svg class="ic" style="left:177px;top:139px"><use href="#fo"/></svg>
<div class="lbl" style="left:156px;top:177px">BOOK EFFECT<br>templates I...</div>
<svg class="ic" style="left:252px;top:139px"><use href="#fo"/></svg>
<div class="lbl" style="left:231px;top:177px">bugs prog</div>
<svg class="ic" style="left:327px;top:139px"><use href="#fo"/></svg>
<div class="lbl" style="left:306px;top:177px">classical<br>countdown</div>
<svg class="ic" style="left:402px;top:139px"><use href="#fo"/></svg>
<div class="lbl" style="left:381px;top:177px">clock prog</div>
<svg class="ic" style="left:477px;top:139px"><use href="#fo"/></svg>
<div class="lbl" style="left:456px;top:177px">Cloudy Sky -<br>WnSoft F...</div>
<svg class="ic" style="left:552px;top:139px"><use href="#fo"/></svg>
<div class="lbl" style="left:531px;top:177px">cloudy sky<br>prog</div>
<svg class="ic" style="left:627px;top:139px"><use href="#fo"/></svg>
<div class="lbl" style="left:606px;top:177px">COMIC<br>EFFECT for...</div>
<svg class="ic" style="left:702px;top:139px"><use href="#fo"/></svg>
<div class="lbl" style="left:681px;top:177px">contest</div>
<svg class="ic" style="left:777px;top:139px"><use href="#fo"/></svg>
<div class="lbl" style="left:756px;top:177px">cover screen</div>
<svg class="ic" style="left:852px;top:139px"><use href="#fo"/></svg>
<div class="lbl" style="left:831px;top:177px">Creating slide<br>Show - Wn...</div>
<svg class="ic" style="left:27px;top:214px"><use href="#fo"/></svg>
<div class="lbl" style="left:6px;top:252px">Curl Pages<br>demo Ma...</div>
<svg class="ic" style="left:102px;top:214px"><use href="#fo"/></svg>
<div class="lbl" style="left:81px;top:252px">DEMO of<br>elipse</div>
<svg class="ic" style="left:177px;top:214px"><use href="#fo"/></svg>
<div class="lbl" style="left:156px;top:252px">filmstrips</div>
<svg class="ic" style="left:252px;top:214px"><use href="#fo"/></svg>
<div class="lbl" style="left:231px;top:252px">flight 1 prog</div>
<svg class="ic" style="left:327px;top:214px"><use href="#fo"/></svg>
<div class="lbl" style="left:306px;top:252px">flight 2 prog</div>
<svg class="ic" style="left:402px;top:214px"><use href="#fo"/></svg>
<div class="lbl" style="left:381px;top:252px">Grid, Adjust<br>precisely y...</div>
<svg class="ic" style="left:477px;top:214px"><use href="#fo"/></svg>
<div class="lbl" style="left:456px;top:252px">Here's a little<br>Puzzle for y...</div>
<svg class="ic" style="left:552px;top:214px"><use href="#fo"/></svg>
<div class="lbl" style="left:531px;top:252px">Libya - Day<br>08, First sli...</div>
<svg class="ic" style="left:627px;top:214px"><use href="#fo"/></svg>
<div class="lbl" style="left:606px;top:252px">masks</div>
<svg class="ic" style="left:702px;top:214px"><use href="#fo"/></svg>
<div class="lbl" style="left:681px;top:252px">Master of the<br>Time - WnS...</div>
<svg class="ic" style="left:777px;top:214px"><use href="#fo"/></svg>
<div class="lbl" style="left:756px;top:252px">Mirage, Effect<br>of reflectio...</div>
<svg class="ic" style="left:852px;top:214px"><use href="#fo"/></svg>
<div class="lbl" style="left:831px;top:252px">NOW YOU<br>CAN DO IT ...</div>
<svg class="ic" style="left:27px;top:289px"><use href="#fo"/></svg>
<div class="lbl" style="left:6px;top:327px">Personal<br>navigati...</div>
<svg class="ic" style="left:102px;top:289px"><use href="#fo"/></svg>
<div class="lbl" style="left:81px;top:327px">Photo Cube,<br>Free Phot...</div>
<svg class="ic" style="left:177px;top:289px"><use href="#fo"/></svg>
<div class="lbl" style="left:156px;top:327px">PicturesToExe<br>v5_00 beta...</div>
<svg class="ic" style="left:252px;top:289px"><use href="#fo"/></svg>
<div class="lbl" style="left:231px;top:327px">PicturesToExe<br>v5_00 beta...</div>
<svg class="ic" style="left:327px;top:289px"><use href="#fo"/></svg>
<div class="lbl" style="left:306px;top:327px">Real Time<br>sample of t...</div>
<svg class="ic" style="left:402px;top:289px"><use href="#fo"/></svg>
<div class="lbl" style="left:381px;top:327px">Rectangle<br>What for ...</div>
<svg class="ic" style="left:477px;top:289px"><use href="#fo"/></svg>
<div class="lbl" style="left:456px;top:327px">rectangle prog</div>
<svg class="ic" style="left:552px;top:289px"><use href="#fo"/></svg>
<div class="lbl" style="left:531px;top:327px">ruler</div>
<svg class="ic" style="left:627px;top:289px"><use href="#fo"/></svg>
<div class="lbl" style="left:606px;top:327px">shows by the<br>dom</div>
<svg class="ic" style="left:702px;top:289px"><use href="#fo"/></svg>
<div class="lbl" style="left:681px;top:327px">stage effect</div>
<svg class="ic" style="left:777px;top:289px"><use href="#fo"/></svg>
<div class="lbl" style="left:756px;top:327px">The Sun Lies<br>Down - W...</div>
<svg class="ic" style="left:852px;top:289px"><use href="#fo"/></svg>
<div class="lbl" style="left:831px;top:327px">Tutorial<br>Informati...</div>
<svg class="ic" style="left:27px;top:364px"><use href="#fo"/></svg>
<div class="lbl" style="left:6px;top:402px">video card</div>
<svg class="ic" style="left:102px;top:364px"><use href="#fo"/></svg>
<div class="lbl" style="left:81px;top:402px">White Frame<br>your pcitu...</div>
<svg class="ic" style="left:177px;top:364px"><use href="#fo"/></svg>
<div class="lbl" style="left:156px;top:402px">Wildlife Map<br>Denver to ...</div>
<svg class="ic" style="left:252px;top:364px"><use href="#ex"/></svg>
<div class="lbl" style="left:231px;top:402px">boom.exe</div>
<svg class="ic" style="left:327px;top:364px"><use href="#ex"/></svg>
<div class="lbl" style="left:306px;top:402px">Earth.exe</div>
<svg class="ic" style="left:402px;top:364px"><use href="#ex"/></svg>
<div class="lbl" style="left:381px;top:402px">Plane.exe</div>
<svg class="ic" style="left:477px;top:364px"><use href="#ie"/></svg>
<div class="lbl" style="left:456px;top:402px">Cloudy Sky -<br>WnSoft F...</div>
<svg class="ic" style="left:552px;top:364px"><use href="#ie"/></svg>
<div class="lbl" style="left:531px;top:402px">Creating slide<br>Show - Wn...</div>
<svg class="ic" style="left:627px;top:364px"><use href="#ie"/></svg>
<div class="lbl" style="left:606px;top:402px">Here's a little<br>Puzzle for y...</div>
<svg class="ic" style="left:702px;top:364px"><use href="#ie"/></svg>
<div class="lbl" style="left:681px;top:402px">Master of the<br>Time - WnS...</div>
<svg class="ic" style="left:777px;top:364px"><use href="#ie"/></svg>
<div class="lbl" style="left:756px;top:402px">NOW YOU<br>CAN DO IT ...</div>
<svg class="ic" style="left:852px;top:364px"><use href="#ie"/></svg>
<div class="lbl" style="left:831px;top:402px">PicturesToExe<br>v5_00 beta...</div>
<svg class="ic" style="left:27px;top:439px"><use href="#ie"/></svg>
<div class="lbl" style="left:6px;top:477px">PicturesToExe<br>v5_00 beta...</div>
<svg class="ic" style="left:102px;top:439px"><use href="#ie"/></svg>
<div class="lbl" style="left:81px;top:477px">Real Time<br>sample of t...</div>
<svg class="ic" style="left:177px;top:439px"><use href="#ie"/></svg>
<div class="lbl" style="left:156px;top:477px">Rectangle<br>What for...</div>
<svg class="ic" style="left:252px;top:439px"><use href="#ie"/></svg>
<div class="lbl" style="left:231px;top:477px">Tutorial<br>Informati...</div>
<svg class="ic" style="left:327px;top:439px"><use href="#ie"/></svg>
<div class="lbl" style="left:306px;top:477px">Wildlife Map<br>Denver to ...</div>
<svg class="ic" style="left:402px;top:439px"><use href="#ie"/><use href="#sc"/></svg>
<div class="lbl" style="left:381px;top:477px">PicturesToExe<br>v5.00 beta ...</div>
<svg class="ic" style="left:477px;top:439px"><use href="#ie"/><use href="#sc"/></svg>
<div class="lbl" style="left:456px;top:477px">Synchroniza...<br>to soundtra...</div>
<svg class="ic" style="left:552px;top:439px"><use href="#mp"/></svg>
<div class="lbl" style="left:531px;top:477px">4xboom2.mp3</div>
<svg class="ic" style="left:627px;top:439px"><use href="#mp"/></svg>
<div class="lbl" style="left:606px;top:477px">boom2.mp3</div>
<svg class="ic" style="left:702px;top:439px"><use href="#mv"/></svg>
<div class="lbl" style="left:681px;top:477px">4xboom2.mov</div>
<svg class="ic" style="left:777px;top:439px"><use href="#mv"/></svg>
<div class="lbl" style="left:756px;top:477px">boom2.mov</div>
<div class="a" style="left:10px;top:176px;width:66px;height:52px;border:1px dotted #000;background:#fff"></div><div class="lbl" style="left:6px;top:177px">Big Picture<br>effect, An<br>other torture<br>demo for PTE</div>
<!-- status bar -->
<style>.sp{position:absolute;top:631px;height:20px;box-sizing:border-box;border:1px solid;border-color:#808080 #fff #fff #808080}</style>
<div class="sp" style="left:4px;width:736px"></div>
<div class="sp" style="left:742px;width:76px"></div>
<div class="sp" style="left:820px;width:159px"></div>
<div class="t" style="left:6.3px;top:635px;letter-spacing:-0.28px">59 objects</div>
<div class="t" style="left:744.500px;top:635px;letter-spacing:-0.45px">17.6 MB</div>
<div class="t" style="left:844px;top:635px;letter-spacing:-0.39px">My Computer</div>
<svg class="a" style="left:824px;top:631px" width="16" height="20" viewBox="824 631 16 20">
<path d="M826.300 633.400 L834.500 632.600 L835.600 633.300 L835.600 643.600 L826.300 643.600 Z" fill="#38a0f4" stroke="#a4b8e4" stroke-width="0.800"/>
<path d="M827.300 634 L832 633.600 L831 640 L827.300 641.500 Z" fill="#7cd0fc" opacity="0.85"/>
<path d="M835.600 633.300 L837.600 634.300 L837.600 644.500 L835.600 643.600 Z" fill="#5866a8"/>
<path d="M826.300 643.800 L835.600 643.800 L837.600 644.800 L837.600 648.800 L835.500 649.500 L826.300 649.300 Z" fill="#e4ecf8" stroke="#98a4c4" stroke-width="0.600"/>
<path d="M832 644 L835.600 644 L837.500 645 L837.500 648.800 L835.300 649.400 L832 649.300 Z" fill="#7482b4"/>
<path d="M832.500 642 L835 642 L835 645.500 L832.500 645.500 Z" fill="#3860c8"/>
<path d="M826.800 645.500 H831 M826.800 647.500 H831" stroke="#b8e8f0" stroke-width="1"/>
<path d="M828 649.800 H836.500" stroke="#584868" stroke-width="0.900"/>
</svg>
<!-- grip -->
<svg class="a" style="left:964px;top:637px" width="14" height="14" viewBox="0 0 14 14"><path d="M13 1 L1 13 M13 5 L5 13 M13 9 L9 13" stroke="#808080" stroke-width="1.300"/><path d="M13 2.200 L2.200 13 M13 6.200 L6.200 13 M13 10.200 L10.200 13" stroke="#fff" stroke-width="0.900"/></svg>
<!-- DU Meter -->
<div class="a" style="left:877px;top:557px;width:106px;height:70px;background:#d4d0c8"></div>
<div class="a" style="left:877px;top:557px;width:106px;height:1px;background:#d4d0c8"></div>
<div class="a" style="left:878px;top:558px;width:105px;height:1px;background:#fff"></div>
<div class="a" style="left:878px;top:558px;width:1px;height:67px;background:#fff"></div>
<div class="a" style="left:877px;top:626px;width:106px;height:1px;background:#404040"></div>
<div class="a" style="left:878px;top:625px;width:105px;height:1px;background:#808080"></div>
<div class="a" id="dut" style="left:881px;top:561px;width:102px;height:15px;overflow:hidden"><div class="a" style="left:0.0px;top:0;width:3.8px;height:15px;background:rgb(0,255,0)"></div><div class="a" style="left:3.2px;top:0;width:6.2px;height:15px;background:rgb(27,228,0)"></div><div class="a" style="left:8.8px;top:0;width:11.8px;height:15px;background:rgb(41,214,0)"></div><div class="a" style="left:20.0px;top:0;width:9.6px;height:15px;background:rgb(59,196,0)"></div><div class="a" style="left:29.0px;top:0;width:4.4px;height:15px;background:rgb(71,184,0)"></div><div class="a" style="left:32.8px;top:0;width:13.0px;height:15px;background:rgb(85,170,0)"></div><div class="a" style="left:45.2px;top:0;width:8.4px;height:15px;background:rgb(104,151,0)"></div><div class="a" style="left:53.0px;top:0;width:8.4px;height:15px;background:rgb(119,136,0)"></div><div class="a" style="left:60.8px;top:0;width:9.0px;height:15px;background:rgb(133,122,0)"></div><div class="a" style="left:69.2px;top:0;width:8.4px;height:15px;background:rgb(148,107,0)"></div><div class="a" style="left:77.0px;top:0;width:4.6px;height:15px;background:rgb(149,92,0)"></div><div class="a" style="left:81.0px;top:0;width:12.3px;height:15px;background:rgb(173,82,0)"></div><div class="a" style="left:92.7px;top:0;width:9.9px;height:15px;background:rgb(191,64,0)"></div></div>
<div class="t" style="left:883.500px;top:563px;font-weight:700;font-size:11px;color:#d4d0c8;line-height:13px;letter-spacing:0">DU Meter</div>
<div class="a" style="left:883px;top:579px;width:101px;height:26px;box-sizing:border-box;border:1px solid #000;background:#a8c4c4"></div>
<div class="a" style="left:883px;top:607px;width:101px;height:14px;box-sizing:border-box;border:1px solid #000;background:#fff"></div>
<div class="t" style="left:898px;top:610px;font-size:8px;line-height:10px;font-family:'Liberation Sans',sans-serif;-webkit-text-stroke:0.3px">DL: 0.0 kB/sec  UL: 0.0</div>


</body></html>
